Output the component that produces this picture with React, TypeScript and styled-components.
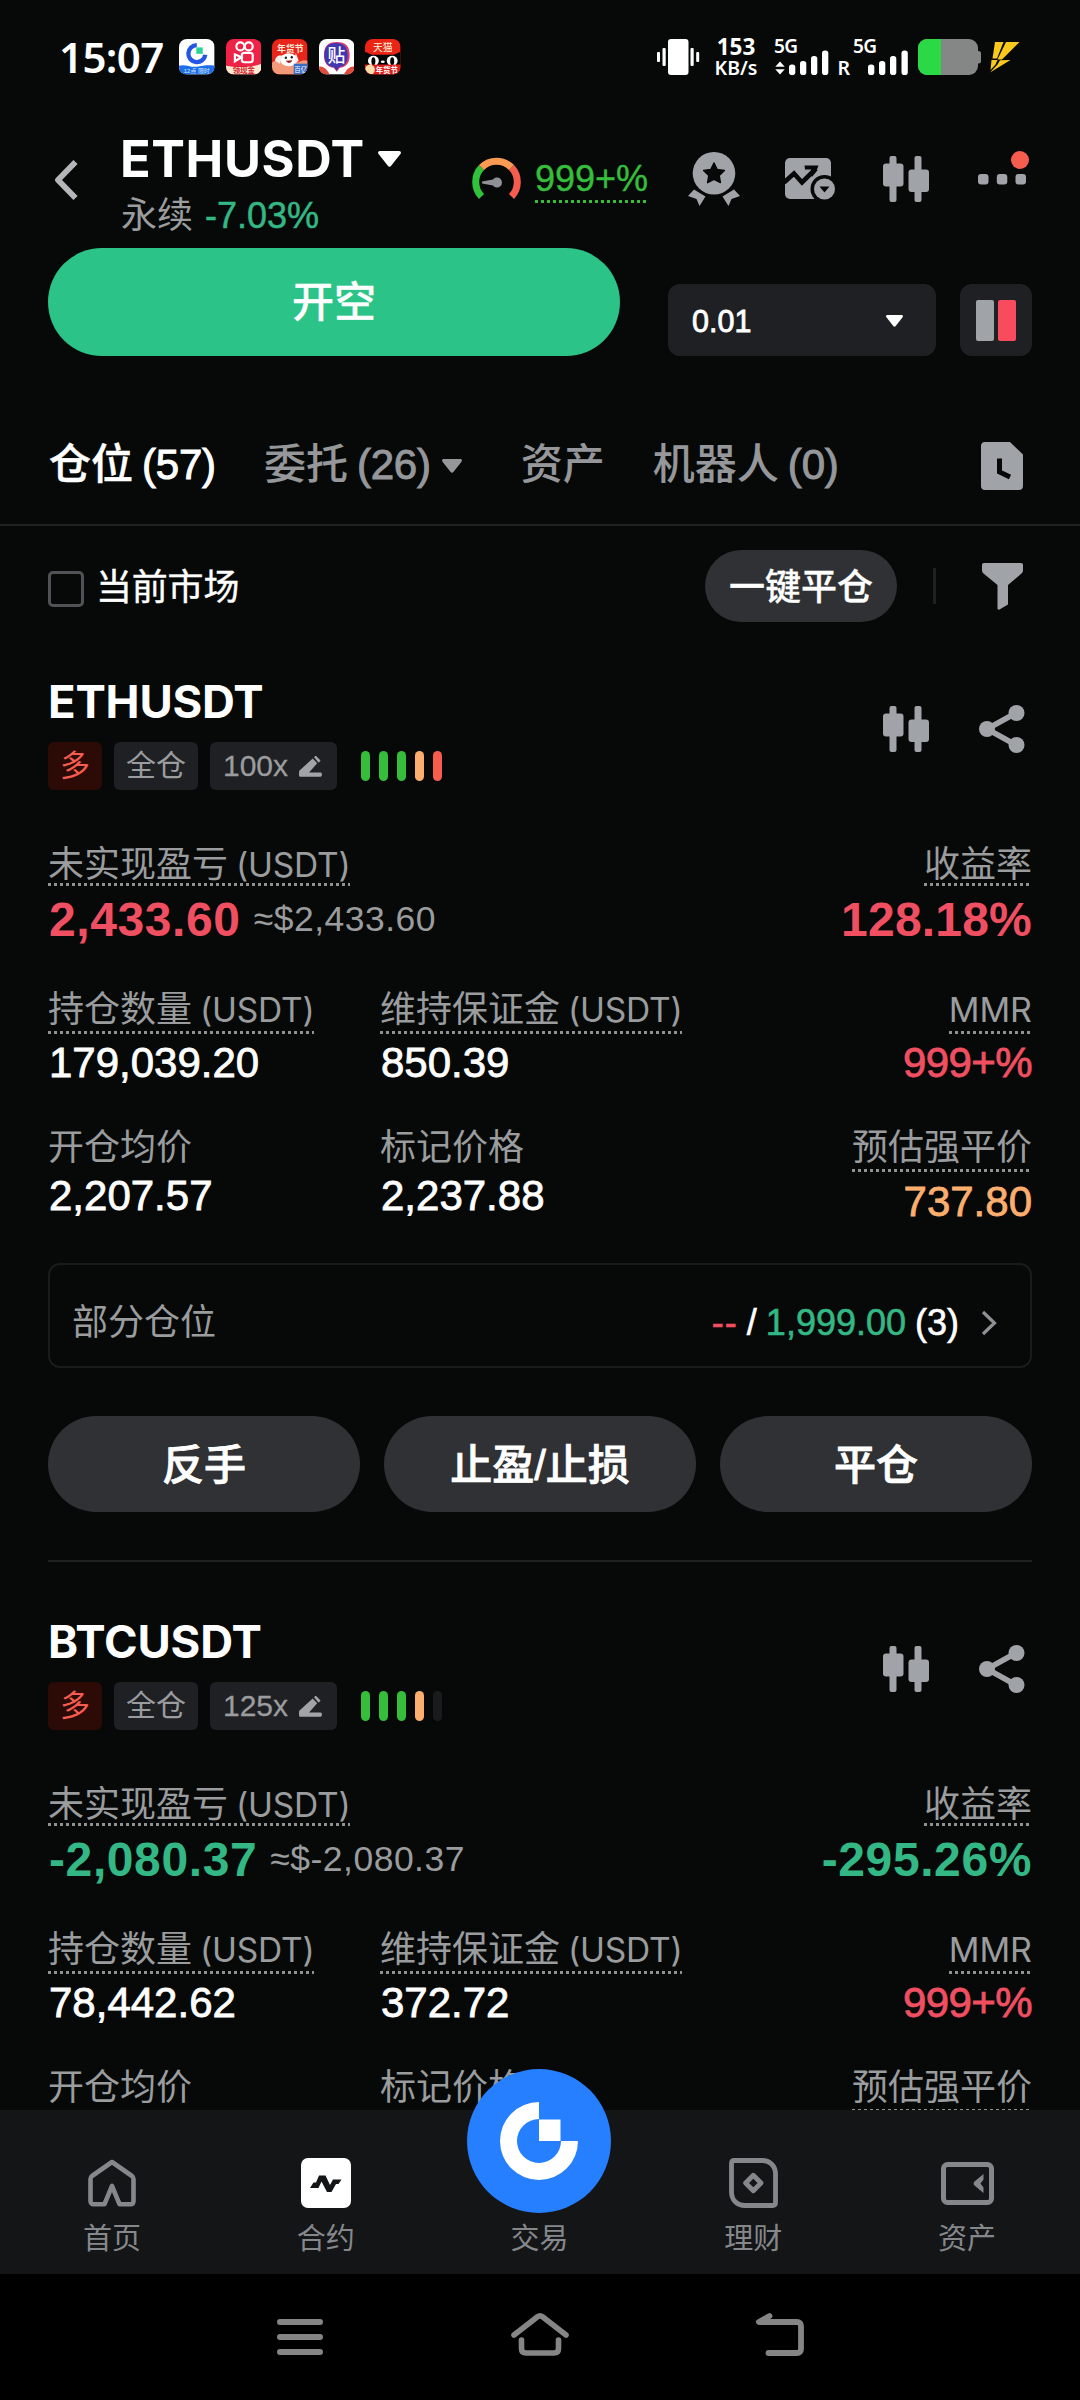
import React from 'react';
import styled, { createGlobalStyle, css } from 'styled-components';

const sans = "'Liberation Sans', 'Noto Sans CJK SC', sans-serif";
const caps = "Inter, 'Liberation Sans', 'Noto Sans CJK SC', sans-serif";
const system = "'Noto Sans', 'Noto Sans CJK SC', sans-serif";

const c = {
  bg: '#060908',
  panel: '#1f2024',
  pill: '#303134',
  line: '#1e2022',
  text: '#ffffff',
  muted: '#a0a4a8',
  label: '#9a9c9e',
  nav: '#85888b',
  green: '#2bc387',
  profit: '#33b885',
  lime: '#35bd3b',
  red: '#f04f62',
  coral: '#f75d4f',
  orange: '#fcae6e',
  blue: '#257fff',
};

const Global = createGlobalStyle`
  html, body { margin: 0; padding: 0; background: ${c.bg}; }
  * { box-sizing: border-box; }
  svg { display: block; flex: none; }
`;

const Screen = styled.div`
  width: 1080px;
  height: 2400px;
  display: flex;
  flex-direction: column;
  overflow: hidden;
  background: ${c.bg};
  color: ${c.text};
  font-family: ${sans};
`;

const medium = css`
  font-weight: 500;
  -webkit-text-stroke: 0.8px currentColor;
`;

/* ---------- status bar ---------- */

const StatusBar = styled.header`
  flex: none;
  height: 114px;
  padding: 0 60px 0 59px;
  display: flex;
  align-items: center;
  justify-content: space-between;
  font-family: ${system};
`;

const StatusLeft = styled.div`
  display: flex;
  align-items: center;
`;

const Clock = styled.span`
  width: 120px;
  font-size: 42px;
  line-height: 48px;
  font-weight: 600;
  letter-spacing: -0.6px;
`;

const AppIcons = styled.div`
  display: flex;
  gap: 11px;
`;

const StatusRight = styled.div`
  display: flex;
  align-items: center;
  height: 36px;
`;

const Speed = styled.div`
  width: 60px;
  margin: 0 5px 0 6px;
  display: flex;
  flex-direction: column;
  align-items: center;
  font-weight: 700;
  line-height: 21px;
`;

const SpeedValue = styled.span`
  font-size: 22.5px;
`;

const SpeedUnit = styled.span`
  font-size: 19.5px;
  font-weight: 600;
`;

const BatterySlot = styled.div`
  margin-left: 2px;
`;

/* ---------- header ---------- */

const Header = styled.div`
  flex: none;
  height: 134px;
  padding: 15px 42px 0 54px;
  display: flex;
  align-items: flex-start;
`;

const Back = styled.div`
  width: 66px;
  padding-top: 31px;
`;

const TitleBlock = styled.div`
  flex: 1;
  display: flex;
  flex-direction: column;
  gap: 4px;
`;

const TitleRow = styled.div`
  display: flex;
  align-items: center;
  gap: 13px;
`;

const Title = styled.h1`
  margin: 0;
  font-family: ${caps};
  font-size: 50.5px;
  line-height: 60px;
  font-weight: 700;
  letter-spacing: 0.6px;
`;

const Subtitle = styled.div`
  display: flex;
  gap: 12px;
  font-size: 36px;
  line-height: 44px;
  padding: 1px 0 0 1px;
  color: ${c.label};
`;

const Change = styled.span`
  color: ${c.profit};
  -webkit-text-stroke: 0.5px currentColor;
`;

const dotted = (color: string) => css`
  background: repeating-linear-gradient(90deg, ${color} 0 3px, transparent 3px 6px) left bottom / 100% 3px no-repeat;
`;

const Risk = styled.div`
  display: flex;
  gap: 14px;
  margin-right: 30px;
  padding-top: 27px;
`;

const RiskValue = styled.span`
  height: 47px;
  font-size: 36px;
  line-height: 46px;
  color: ${c.lime};
  -webkit-text-stroke: 0.4px currentColor;
  ${dotted('#35bd3b')}
`;

const HeaderIcons = styled.div`
  display: flex;
  gap: 24px;
  padding-top: 20px;
`;

const IconCell = styled.div`
  width: 72px;
  height: 60px;
  display: flex;
  justify-content: center;
  align-items: center;
`;

/* ---------- order entry ---------- */

const TradeRow = styled.div`
  flex: none;
  height: 108px;
  padding: 0 48px;
  display: flex;
  align-items: flex-end;
`;

const ShortButton = styled.button`
  width: 572px;
  height: 108px;
  padding: 2px 0 0;
  border: 0;
  border-radius: 54px;
  background: ${c.green};
  color: ${c.text};
  font: 500 42px/48px ${sans};
  -webkit-text-stroke: 0.3px currentColor;
`;

const StepSelect = styled.div`
  width: 268px;
  height: 72px;
  margin: 0 24px 0 48px;
  padding: 0 33px 0 24px;
  display: flex;
  align-items: center;
  justify-content: space-between;
  border-radius: 12px;
  background: ${c.panel};
  font-size: 30.5px;
  line-height: 36px;
  ${medium}
`;

const StepValue = styled.span`
  padding-top: 2px;
`;

const StepCaret = styled.span`
  padding-top: 2px;
`;

const DepthToggle = styled.div`
  width: 72px;
  height: 72px;
  display: flex;
  align-items: center;
  justify-content: center;
  gap: 4px;
  border-radius: 12px;
  background: ${c.panel};
`;

const DepthBar = styled.i<{ $color: string }>`
  width: 18px;
  height: 41px;
  border-radius: 2px;
  background: ${(p) => p.$color};
`;

/* ---------- tabs & filters ---------- */

const Tabs = styled.nav`
  flex: none;
  height: 170px;
  padding: 48px 54px 0 49px;
  display: flex;
  align-items: flex-start;
  gap: 48px;
  border-bottom: 2px solid ${c.line};
`;

const Tab = styled.div<{ $active?: boolean }>`
  display: flex;
  align-items: center;
  font-size: 42px;
  line-height: 122px;
  font-weight: 500;
  color: ${(p) => (p.$active ? c.text : '#95979a')};
  -webkit-text-stroke: ${(p) => (p.$active ? 0.5 : 0.1)}px currentColor;
`;

const Count = styled.span`
  margin-left: 9px;
  letter-spacing: -0.2px;
  -webkit-text-stroke: 1px currentColor;
`;

const TabCaret = styled.span`
  margin: 2px 11px 0 11px;
`;

const HistoryIcon = styled.div`
  margin-left: auto;
  padding: 38px 3px 0 0;
`;

const FilterRow = styled.div`
  flex: none;
  height: 96px;
  padding: 24px 57px 0 48px;
  display: flex;
  align-items: center;
`;

const CheckBox = styled.span`
  width: 36px;
  height: 36px;
  margin: 5px 12px 0 0;
  border: 3px solid #505255;
  border-radius: 5px;
`;

const CheckLabel = styled.span`
  padding-top: 4px;
  font-size: 36px;
  line-height: 44px;
  letter-spacing: -0.2px;
  -webkit-text-stroke: 0.4px currentColor;
`;

const CloseAll = styled.button`
  width: 192px;
  height: 72px;
  margin-left: auto;
  padding: 4px 0 0;
  border: 0;
  border-radius: 36px;
  background: ${c.pill};
  color: ${c.text};
  font: 500 36px/44px ${sans};
  -webkit-text-stroke: 0.3px currentColor;
`;

const Separator = styled.i`
  width: 3px;
  height: 36px;
  margin: 0 46px 0 36px;
  background: ${c.line};
`;

/* ---------- positions ---------- */

const Positions = styled.main`
  flex: 1;
  min-height: 0;
  overflow: hidden;
`;

const Card = styled.section`
  height: 940px;
  margin: 0 48px;
  padding-top: 52px;
  border-bottom: 2px solid ${c.line};
`;

const CardHead = styled.div`
  display: flex;
  justify-content: space-between;
  height: 116px;
  margin-bottom: 51px;
`;

const Symbol = styled.h2`
  margin: 0 0 12px;
  font-family: ${caps};
  font-size: 45.5px;
  line-height: 56px;
  font-weight: 650;
  letter-spacing: -0.2px;
`;

const Tags = styled.div`
  display: flex;
  align-items: center;
  gap: 12px;
`;

const Tag = styled.span<{ $long?: boolean }>`
  height: 48px;
  padding: 0 12px;
  display: flex;
  align-items: center;
  border-radius: 6px;
  font-size: 30px;
  line-height: 48px;
  background: ${(p) => (p.$long ? '#2c0b07' : c.panel)};
  color: ${(p) => (p.$long ? c.coral : c.label)};
`;

const Leverage = styled(Tag)`
  width: 127px;
  padding: 0 15px 0 13px;
  justify-content: space-between;
  -webkit-text-stroke: 0.3px currentColor;
`;

const RiskMeter = styled.div`
  display: flex;
  gap: 9px;
  margin-left: 12px;
`;

const RiskTick = styled.i<{ $color: string }>`
  width: 9px;
  height: 30px;
  border-radius: 4.5px;
  background: ${(p) => p.$color};
`;

const CardActions = styled.div`
  display: flex;
  gap: 24px;
  margin: 25px -6px 0 0;
`;

const Metrics = styled.div`
  display: grid;
  grid-template-columns: 332px 1fr auto;
  align-items: start;
  margin-bottom: 36px;
`;

const PnlRow = styled.div`
  display: flex;
  justify-content: space-between;
  margin-bottom: 39px;
`;

const Metric = styled.div<{ $end?: boolean }>`
  display: flex;
  flex-direction: column;
  align-items: ${(p) => (p.$end ? 'flex-end' : 'flex-start')};
`;

const Label = styled.div<{ $h: number; $dotted?: boolean; $gap: number }>`
  height: ${(p) => p.$h}px;
  margin-bottom: ${(p) => p.$gap}px;
  font-size: 36px;
  line-height: 47px;
  color: ${c.label};
  white-space: nowrap;
  ${(p) => p.$dotted && dotted('#8f9193')}
`;

const Unit = styled.span`
  margin-left: 8px;
  font-family: ${caps};
  font-size: 33.5px;
  letter-spacing: -0.2px;
`;

const Ratio = styled.span`
  font-family: ${caps};
  font-size: 34px;
`;

const Pnl = styled.div<{ $color: string; $tight?: boolean }>`
  padding-left: 1px;
  font-size: 48px;
  line-height: 58px;
  height: 56px;
  font-weight: 700;
  letter-spacing: ${(p) => (p.$tight ? 0.2 : 0.6)}px;
  color: ${(p) => p.$color};
`;

const PnlLine = styled.div`
  display: flex;
  align-items: flex-start;
  gap: 13px;
`;

const Approx = styled.span`
  margin-top: 6px;
  font-size: 35.5px;
  line-height: 44px;
  letter-spacing: 0.5px;
  color: ${c.label};
`;

const Value = styled.div<{ $color?: string; $tight?: boolean }>`
  padding-left: 1px;
  font-size: 42px;
  line-height: 50px;
  letter-spacing: ${(p) => (p.$tight ? -0.6 : 0)}px;
  color: ${(p) => p.$color ?? c.text};
  ${medium}
`;

const PartialBox = styled.div`
  height: 105px;
  padding: 14px 33px 0 22px;
  display: flex;
  align-items: center;
  justify-content: space-between;
  border: 2px solid #191b1c;
  border-radius: 12px;
  font-size: 36px;
  line-height: 44px;
  color: ${c.label};
`;

const PartialValue = styled.div`
  display: flex;
  align-items: center;
  gap: 9px;
  color: ${c.text};
  -webkit-text-stroke: 0.6px currentColor;
`;

const Tint = styled.span<{ $color: string }>`
  color: ${(p) => p.$color};
`;

const Dashes = styled(Tint)`
  letter-spacing: 1px;
`;

const Arrow = styled.span`
  margin-left: 13px;
`;

const Buttons = styled.div`
  display: grid;
  grid-template-columns: repeat(3, 1fr);
  gap: 24px;
  margin-top: 48px;
`;

const PillButton = styled.button`
  height: 96px;
  padding: 3px 0 0;
  border: 0;
  border-radius: 48px;
  background: ${c.pill};
  color: ${c.text};
  font: 500 42px/48px ${sans};
  -webkit-text-stroke: 0.8px currentColor;
`;

/* ---------- bottom bars ---------- */

const BottomNav = styled.nav`
  flex: none;
  position: relative;
  height: 164px;
  padding: 0 6px 0 5px;
  display: grid;
  grid-template-columns: repeat(5, 1fr);
  background: #141517;
`;

const NavItem = styled.div`
  display: flex;
  flex-direction: column;
  align-items: center;
  font-size: 29px;
  line-height: 36px;
  color: ${c.nav};
`;

const NavIcon = styled.div`
  height: 60px;
  margin: 43px 0 8px;
  display: flex;
  align-items: center;
`;

const TradeFab = styled.div`
  position: absolute;
  left: 467px;
  top: -41px;
`;

const SystemBar = styled.footer`
  flex: none;
  height: 126px;
  padding: 0 180px;
  display: grid;
  grid-template-columns: repeat(3, 1fr);
  justify-items: center;
  align-items: center;
  background: #000;
`;

/* ---------- icons ---------- */

const grey = '#a0a4a8';

const Caret = ({ w, h, color }: { w: number; h: number; color: string }) => (
  <svg width={w} height={h} viewBox="0 0 24 16" preserveAspectRatio="none" fill={color}>
    <path d="M2 0h20c1.800 0 2.500 1.800 1.400 3L13.700 14.800c-1 1.200-2.400 1.200-3.400 0L.6 3C-.5 1.800.2 0 2 0z" />
  </svg>
);

const Candles = () => (
  <svg width="46" height="46" viewBox="0 0 46 46" fill={grey}>
    <rect x="6.500" y="0" width="7" height="46" rx="2" />
    <rect x="0" y="7.500" width="20.500" height="23" rx="3" />
    <rect x="31.500" y="0" width="7" height="46" rx="2" />
    <rect x="25.500" y="13.500" width="20.500" height="22.500" rx="3" />
  </svg>
);

const Share = () => (
  <svg width="46" height="48" viewBox="0 0 46 48" fill={grey}>
    <path d="M37 8 8 24l29 16" fill="none" stroke={grey} strokeWidth="5.500" />
    <circle cx="37.500" cy="8" r="8" />
    <circle cx="8" cy="24" r="8" />
    <circle cx="37.500" cy="40" r="8" />
  </svg>
);

const Medal = () => (
  <svg width="52" height="54" viewBox="0 0 52 54">
    <path d="M0 44 6 37.500 17.500 44.500 11.500 54 8.500 47z" fill={grey} />
    <path d="M52 44 46 37.500 34.500 44.500 40.500 54 43.500 47z" fill={grey} />
    <circle cx="26" cy="21.300" r="21.300" fill={grey} />
    <path
      d="m26 11 3.200 6.500 7.200 1-5.200 5 1.200 7.100-6.400-3.300-6.400 3.300 1.200-7.100-5.200-5 7.200-1z"
      fill={c.bg}
      stroke={c.bg}
      strokeWidth="1.500"
      strokeLinejoin="round"
    />
  </svg>
);

const ChartIcon = () => (
  <svg width="50" height="44" viewBox="0 0 50 44">
    <rect x="0" y="1" width="46" height="41" rx="5" fill={grey} />
    <path d="M-1 25.500 9 16.500 17 25.500 31 11.500" fill="none" stroke={c.bg} strokeWidth="4.600" />
    <path d="M19.500 8.500H33.500L31 15 27 20 26 12.500H20z" fill={c.bg} />
    <circle cx="39.500" cy="32" r="14" fill={c.bg} />
    <circle cx="39.500" cy="32" r="10.500" fill={grey} />
    <path d="M34.500 29.500h10l-5 6z" fill={c.bg} />
  </svg>
);

const MoreIcon = () => (
  <svg width="56" height="56" viewBox="0 0 56 56" fill={grey}>
    <rect x="4" y="23" width="10.500" height="10.500" rx="3" />
    <rect x="22.800" y="23" width="10.500" height="10.500" rx="3" />
    <rect x="41.500" y="23" width="10.500" height="10.500" rx="3" />
    <circle cx="46" cy="9" r="9" fill={c.coral} />
  </svg>
);

const Gauge = () => (
  <svg width="49" height="49" viewBox="0 0 49 49" fill="none" strokeWidth="7">
    <path d="M9.500 40.500A21 21 0 0 1 9.500 11.500" stroke="#2fc23a" />
    <path d="M39.500 40.500A21 21 0 0 0 39.500 11.500" stroke="#f75d4f" />
    <path d="M9.500 11.500A21 21 0 0 1 39.500 11.500" stroke="#fb9a52" />
    <path d="M10 25.600 21 23.500a5 5 0 1 1 0 6L10 27.400z" fill="#8f9194" />
  </svg>
);

const Pencil = () => (
  <svg width="23" height="21" viewBox="0 0 24 22" fill={grey}>
    <path d="m15.700 1.200 1-1c.5-.4 1-.4 1.500 0l3.800 3.900c.5.500.5 1 0 1.500l-1.500 1.500z" />
    <path d="M14.300 2.700 19 7.600 10.500 17.300H22.500c1 0 1.500 1 1.500 2.200s-.5 2.200-1.500 2.200H1C.3 21.700 0 21 0 20.500v-4c0-.5.200-1 .5-1.300z" />
  </svg>
);

const AppGate = () => (
  <svg width="35.600" height="35.600" viewBox="0 0 36 36">
    <clipPath id="gate"><rect width="36" height="36" rx="8" /></clipPath>
    <g clipPath="url(#gate)">
      <rect width="36" height="36" fill="#fff" />
      <path d="M18 6.200A8.600 8.600 0 1 0 26.600 16" fill="none" stroke="#2456e6" strokeWidth="4.400" />
      <rect x="17.500" y="8.500" width="6.500" height="6.500" fill="#2bd39a" />
      <path d="M0 27c6-2 12 2 18 1s12-2 18-1v9H0z" fill="#1c6fe8" />
      <text x="18" y="34" textAnchor="middle" fontSize="6" fill="#d6e8ff" fontFamily={sans}>12点 限时</text>
    </g>
  </svg>
);

const AppKuai = () => (
  <svg width="35.600" height="35.600" viewBox="0 0 36 36">
    <clipPath id="kuai"><rect width="36" height="36" rx="8" /></clipPath>
    <g clipPath="url(#kuai)">
      <rect width="36" height="36" fill="#ef2347" />
      <g fill="none" stroke="#fff" strokeWidth="2.200">
        <circle cx="14.500" cy="7.500" r="4" />
        <circle cx="23" cy="7.500" r="4" />
        <rect x="16" y="14" width="11" height="9.500" rx="2.500" />
        <path d="M15.500 18.500 9 15.500v7z" />
      </g>
      <path d="M0 27c10 2 26 2 36-2v11H0z" fill="#ffe9d2" />
      <text x="18" y="34" textAnchor="middle" fontSize="7.500" fontWeight="700" fill="#d3202a" fontFamily={sans}>领现金</text>
    </g>
  </svg>
);

const AppFestival = () => (
  <svg width="35.600" height="35.600" viewBox="0 0 36 36">
    <clipPath id="fest"><rect width="36" height="36" rx="8" /></clipPath>
    <g clipPath="url(#fest)">
      <rect width="36" height="36" fill="#e8241b" />
      <path d="M0 24c6-6 12 4 20 2s10-6 16-4v14H0z" fill="#f59a78" />
      <text x="18.500" y="13" textAnchor="middle" fontSize="9" fontWeight="700" fill="#ffe9d6" fontFamily={sans}>年货节</text>
      <ellipse cx="17" cy="21" rx="9" ry="6.500" fill="#fff" />
      <path d="M3 22c1-5 4-6 7-5l-2 8zM24 14l3 8-4 3z" fill="#f4eeee" />
      <circle cx="14" cy="19" r="1.200" fill="#222" />
      <circle cx="20" cy="18.500" r="1.200" fill="#222" />
      <path d="M14 22c2 3 5 3 6.500-.5z" fill="#a41e1c" />
      <rect x="22" y="25" width="14" height="11" fill="#3a6cc4" />
      <text x="29" y="33" textAnchor="middle" fontSize="6.500" fill="#fff" fontFamily={sans}>百亿</text>
    </g>
  </svg>
);

const AppTieba = () => (
  <svg width="35.600" height="35.600" viewBox="0 0 36 36">
    <clipPath id="tie"><rect width="36" height="36" rx="8" /></clipPath>
    <g clipPath="url(#tie)">
      <rect width="36" height="36" fill="#fff" />
      <path d="M0 28c5-1 8 3 11 8H0zM36 28c-5-1-8 3-11 8h11z" fill="#e2493d" />
      <path d="M18 3c9 0 13 4 13 13.500 0 8-3.500 12-10 12.700L18 33l-3-3.800C8.500 28.500 5 24.500 5 16.500 5 7 9 3 18 3z" fill="#d83a6c" />
      <path d="M17 4c8 0 12 4 12 12.500 0 7.500-3 11-9 12L18 32l-3-3.500c-6-1-9.500-4.500-9.500-12C5.500 8 9 4 17 4z" fill="#4038b0" />
      <text x="17.500" y="23.500" textAnchor="middle" fontSize="18" fontWeight="500" fill="#fff" fontFamily={sans}>贴</text>
    </g>
  </svg>
);

const AppTmall = () => (
  <svg width="35.600" height="35.600" viewBox="0 0 36 36">
    <clipPath id="tmall"><rect width="36" height="36" rx="8" /></clipPath>
    <g clipPath="url(#tmall)">
      <rect width="36" height="36" fill="#ec2415" />
      <text x="18" y="12.500" textAnchor="middle" fontSize="10" fill="#fff3da" fontFamily={sans}>天猫</text>
      <path d="M0 13 7 16h22l7-3v13H0z" fill="#060606" />
      <ellipse cx="8.500" cy="22" rx="5.500" ry="5" fill="#fff" />
      <ellipse cx="27.500" cy="22" rx="5.500" ry="5" fill="#fff" />
      <ellipse cx="8.500" cy="22.500" rx="2" ry="4" fill="#060606" />
      <ellipse cx="27.500" cy="22.500" rx="2" ry="4" fill="#060606" />
      <ellipse cx="18" cy="23" rx="2" ry="1.300" fill="#fff" />
      <rect y="26" width="36" height="10" fill="#e11f1f" />
      <circle cx="5" cy="31" r="5" fill="#ffdca8" />
      <text x="22" y="34" textAnchor="middle" fontSize="7.500" fontWeight="700" fill="#fff" fontFamily={sans}>年货节</text>
    </g>
  </svg>
);

const Vibrate = () => (
  <svg width="43" height="36" viewBox="0 0 43 36" fill="#fff">
    <rect x="11" y="0" width="20.500" height="36" rx="3" />
    <rect x="0" y="13" width="3" height="10" rx="1" />
    <rect x="5.500" y="9" width="3.200" height="18" rx="1" />
    <rect x="33.500" y="9" width="3.200" height="18" rx="1" />
    <rect x="39.200" y="13" width="3" height="10" rx="1" />
  </svg>
);

const Signals = () => (
  <svg width="145" height="60" viewBox="-4 -12 145 60" fill="#fff" fontFamily={system} fontWeight="600">
    <text x="-1" y="13.500" fontSize="19" textLength="24">5G</text>
    <path d="m5 22.500 4.700 5.200H.3zM5 35.500l4.700-5.200H.3z" />
    {[14, 25, 36, 47].map((x, i) => (
      <rect key={x} x={x} y={[25.500, 22, 17, 11.500][i]} width="6.300" height={[10.500, 14, 19, 24.500][i]} rx="2.800" />
    ))}
    <text x="62.500" y="36" fontSize="19.500">R</text>
    <text x="78" y="13.500" fontSize="19" textLength="24">5G</text>
    {[93, 104, 115, 126.500].map((x, i) => (
      <rect key={x} x={x} y={[25.500, 22, 17, 11.500][i]} width="6.300" height={[10.500, 14, 19, 24.500][i]} rx="2.800" />
    ))}
  </svg>
);

const Battery = () => (
  <svg width="102" height="36" viewBox="0 0 102 36">
    <clipPath id="bat"><rect width="60" height="36" rx="9" /></clipPath>
    <rect x="56" y="12" width="7" height="12.500" rx="2.500" fill="#858787" />
    <g clipPath="url(#bat)">
      <rect width="60" height="36" fill="#858787" />
      <rect width="23" height="36" fill="#2bd947" />
    </g>
    <path d="M77 3h8.500L79 19.500H74.500zM88 3h13.500L84 20.500H79.500zM73.500 21h6L77.500 25.500 72.500 31zM82 21.300 92.500 21 72 33.500 79.500 25.500z" fill="#fbc91c" />
  </svg>
);

/* ---------- data ---------- */

const G = '#35bd3b';
const O = '#fcae6e';

interface Position {
  symbol: string;
  leverage: string;
  ticks: string[];
  color: string;
  pnl: string;
  approx: string;
  roi: string;
  size: string;
  margin: string;
  entry: string;
  mark: string;
  liq: string;
}

const positions: Position[] = [
  {
    symbol: 'ETHUSDT', leverage: '100x', ticks: [G, G, G, O, c.coral], color: c.red,
    pnl: '2,433.60', approx: '≈$2,433.60', roi: '128.18%', size: '179,039.20', margin: '850.39',
    entry: '2,207.57', mark: '2,237.88', liq: '737.80',
  },
  {
    symbol: 'BTCUSDT', leverage: '125x', ticks: [G, G, G, O, '#1a1b1d'], color: c.profit,
    pnl: '-2,080.37', approx: '≈$-2,080.37', roi: '-295.26%', size: '78,442.62', margin: '372.72',
    entry: '', mark: '', liq: '',
  },
];

const PositionCard = ({ p }: { p: Position }) => (
  <Card>
    <CardHead>
      <div>
        <Symbol>{p.symbol}</Symbol>
        <Tags>
          <Tag $long>多</Tag>
          <Tag>全仓</Tag>
          <Leverage>{p.leverage}<Pencil /></Leverage>
          <RiskMeter>{p.ticks.map((t, i) => <RiskTick key={i} $color={t} />)}</RiskMeter>
        </Tags>
      </div>
      <CardActions>
        <IconCell><Candles /></IconCell>
        <IconCell><Share /></IconCell>
      </CardActions>
    </CardHead>
    <PnlRow>
      <Metric>
        <Label $h={45} $gap={5} $dotted>未实现盈亏<Unit>(USDT)</Unit></Label>
        <PnlLine><Pnl $color={p.color}>{p.pnl}</Pnl><Approx>{p.approx}</Approx></PnlLine>
      </Metric>
      <Metric $end>
        <Label $h={45} $gap={5} $dotted>收益率</Label>
        <Pnl $color={p.color} $tight={!p.roi.startsWith('-')}>{p.roi}</Pnl>
      </Metric>
    </PnlRow>
    <Metrics>
      <Metric>
        <Label $h={48} $gap={4} $dotted>持仓数量<Unit>(USDT)</Unit></Label>
        <Value>{p.size}</Value>
      </Metric>
      <Metric>
        <Label $h={48} $gap={4} $dotted>维持保证金<Unit>(USDT)</Unit></Label>
        <Value>{p.margin}</Value>
      </Metric>
      <Metric $end>
        <Label $h={48} $gap={4} $dotted><Ratio>MMR</Ratio></Label>
        <Value $color={c.red} $tight>999+%</Value>
      </Metric>
    </Metrics>
    <Metrics>
      <Metric>
        <Label $h={44} $gap={3}>开仓均价</Label>
        <Value>{p.entry}</Value>
      </Metric>
      <Metric>
        <Label $h={44} $gap={3}>标记价格</Label>
        <Value>{p.mark}</Value>
      </Metric>
      <Metric $end>
        <Label $h={48} $gap={5} $dotted>预估强平价</Label>
        <Value $color={O}>{p.liq}</Value>
      </Metric>
    </Metrics>
    {p.entry && (
      <>
        <PartialBox>
          部分仓位
          <PartialValue>
            <Dashes $color={c.red}>--</Dashes>/<Tint $color={c.profit}>1,999.00</Tint>(3)
            <Arrow>
              <svg width="16" height="26" viewBox="0 0 16 26" fill="none" stroke="#8f9194" strokeWidth="3.200">
                <path d="m2 2 11.500 11L2 24" />
              </svg>
            </Arrow>
          </PartialValue>
        </PartialBox>
        <Buttons>
          <PillButton>反手</PillButton>
          <PillButton>止盈/止损</PillButton>
          <PillButton>平仓</PillButton>
        </Buttons>
      </>
    )}
  </Card>
);

export default function App() {
  return (
    <Screen>
      <Global />
      <StatusBar>
        <StatusLeft>
          <Clock>15:07</Clock>
          <AppIcons><AppGate /><AppKuai /><AppFestival /><AppTieba /><AppTmall /></AppIcons>
        </StatusLeft>
        <StatusRight>
          <Vibrate />
          <Speed><SpeedValue>153</SpeedValue><SpeedUnit>KB/s</SpeedUnit></Speed>
          <Signals />
          <BatterySlot><Battery /></BatterySlot>
        </StatusRight>
      </StatusBar>

      <Header>
        <Back>
          <svg width="24" height="40" viewBox="0 0 24 40" fill="none" stroke="#b4b7b9" strokeWidth="5.800">
            <path d="M21.500 2 4 20l17.500 18" strokeLinejoin="round" />
          </svg>
        </Back>
        <TitleBlock>
          <TitleRow><Title>ETHUSDT</Title><Caret w={23} h={16} color="#fff" /></TitleRow>
          <Subtitle>永续<Change>-7.03%</Change></Subtitle>
        </TitleBlock>
        <Risk><Gauge /><RiskValue>999+%</RiskValue></Risk>
        <HeaderIcons>
          <IconCell><Medal /></IconCell>
          <IconCell><ChartIcon /></IconCell>
          <IconCell><Candles /></IconCell>
          <IconCell><MoreIcon /></IconCell>
        </HeaderIcons>
      </Header>

      <TradeRow>
        <ShortButton>开空</ShortButton>
        <StepSelect><StepValue>0.01</StepValue><StepCaret><Caret w={17} h={12} color="#fff" /></StepCaret></StepSelect>
        <DepthToggle><DepthBar $color={grey} /><DepthBar $color="#f84c5e" /></DepthToggle>
      </TradeRow>

      <Tabs>
        <Tab $active>仓位<Count>(57)</Count></Tab>
        <Tab>委托<Count>(26)</Count><TabCaret><Caret w={20} h={14} color="#95979a" /></TabCaret></Tab>
        <Tab>资产</Tab>
        <Tab>机器人<Count>(0)</Count></Tab>
        <HistoryIcon>
          <svg width="42" height="48" viewBox="0 0 42 48">
            <path d="M4 0h25l13 12.500V44c0 2.500-1.500 4-4 4H4c-2.500 0-4-1.500-4-4V4c0-2.500 1.500-4 4-4z" fill={grey} />
            <path d="M18.500 16.500v13.500l10.500 5" fill="none" stroke={c.bg} strokeWidth="5" />
          </svg>
        </HistoryIcon>
      </Tabs>

      <FilterRow>
        <CheckBox />
        <CheckLabel>当前市场</CheckLabel>
        <CloseAll>一键平仓</CloseAll>
        <Separator />
        <svg width="41" height="47" viewBox="0 0 41 47" fill={grey}>
          <path d="M2 0h37c1.200 0 2 .8 2 2v5c0 1.500-.5 2.500-1.500 3.500L26 22v19.500L17.500 46.500c-1 .5-2 0-2-1V22L1.500 10.500C.5 9.500 0 8.500 0 7V2C0 .8.8 0 2 0z" />
        </svg>
      </FilterRow>

      <Positions>
        {positions.map((p) => <PositionCard key={p.symbol} p={p} />)}
      </Positions>

      <BottomNav>
        <NavItem>
          <NavIcon>
            <svg width="48" height="48" viewBox="0 0 48 48" fill="none" stroke={c.nav} strokeWidth="4.600" strokeLinejoin="round">
              <path d="M24 3 44 17c1 .8 1.500 1.700 1.500 3v22c0 2-1.300 3.200-3.200 3.200H31.500L24 27l-7.500 18.200H5.700c-2 0-3.200-1.200-3.200-3.200V20c0-1.300.5-2.200 1.500-3z" />
            </svg>
          </NavIcon>
          首页
        </NavItem>
        <NavItem>
          <NavIcon>
            <svg width="50" height="50" viewBox="0 0 50 50">
              <rect width="50" height="50" rx="7" fill="#fff" />
              <path d="M9 30 12.500 24.500H15L18 17.500h6.500L29 27l3-5.500h8.500L37.500 26H35l-4.500 8h-4.500L20.500 23.500 17.500 30z" fill="#141517" />
            </svg>
          </NavIcon>
          合约
        </NavItem>
        <NavItem>
          <NavIcon />
          交易
        </NavItem>
        <NavItem>
          <NavIcon>
            <svg width="49" height="50" viewBox="0 0 49 50" fill="none" stroke={c.nav} strokeWidth="4.800">
              <path d="M5.500 2.500H33c8 0 13.500 5.500 13.500 13.500V44.500c0 2-1 3-3 3H16c-8 0-13.500-5.500-13.500-13.500V5.500c0-2 1-3 3-3z" />
              <path d="m24.300 17.200 7.700 7.800-7.700 7.800L16.600 25z" strokeLinejoin="round" />
            </svg>
          </NavIcon>
          理财
        </NavItem>
        <NavItem>
          <NavIcon>
            <svg width="53" height="43" viewBox="0 0 53 43" fill="none" stroke={c.nav} strokeWidth="5">
              <rect x="2.500" y="2.500" width="48" height="38" rx="4" />
              <path d="M42.500 12v5.500L39.500 21.500l3 4v5.500L33.500 23.500c-1.200-1-1.200-3 0-4z" fill={c.nav} stroke="none" />
            </svg>
          </NavIcon>
          资产
        </NavItem>
        <TradeFab>
          <svg width="144" height="144" viewBox="0 0 144 144">
            <circle cx="72" cy="72" r="72" fill={c.blue} />
            <path d="M72 33a39 39 0 1 0 39 39H94a22 22 0 1 1-22-22z" fill="#fff" />
            <rect x="72" y="50.500" width="21.500" height="21.500" fill="#fff" />
          </svg>
        </TradeFab>
      </BottomNav>

      <SystemBar>
        <svg width="46" height="46" viewBox="0 0 46 46" stroke="#858585" strokeWidth="6" strokeLinecap="round">
          <path d="M3 8h40M3 23h40M3 38h40" />
        </svg>
        <svg width="60" height="48" viewBox="0 3 60 48" fill="none" stroke="#858585" strokeWidth="5.600" strokeLinecap="round" strokeLinejoin="round">
          <path d="M4 25 27.500 6.800c1.600-1.200 3.400-1.200 5 0L56 25M11.500 30v8.500c0 3 1.500 4.500 4.500 4.500h28c3 0 4.500-1.500 4.500-4.500V30" />
        </svg>
        <svg width="48" height="50" viewBox="0 0 48 50" fill="none" stroke="#858585" strokeWidth="5.800" strokeLinecap="round" strokeLinejoin="round">
          <path d="M13.500 4 3 10h38c2.500 0 4 1.500 4 4v23c0 2.500-1.500 4-4 4H12.500" />
        </svg>
      </SystemBar>
    </Screen>
  );
}
